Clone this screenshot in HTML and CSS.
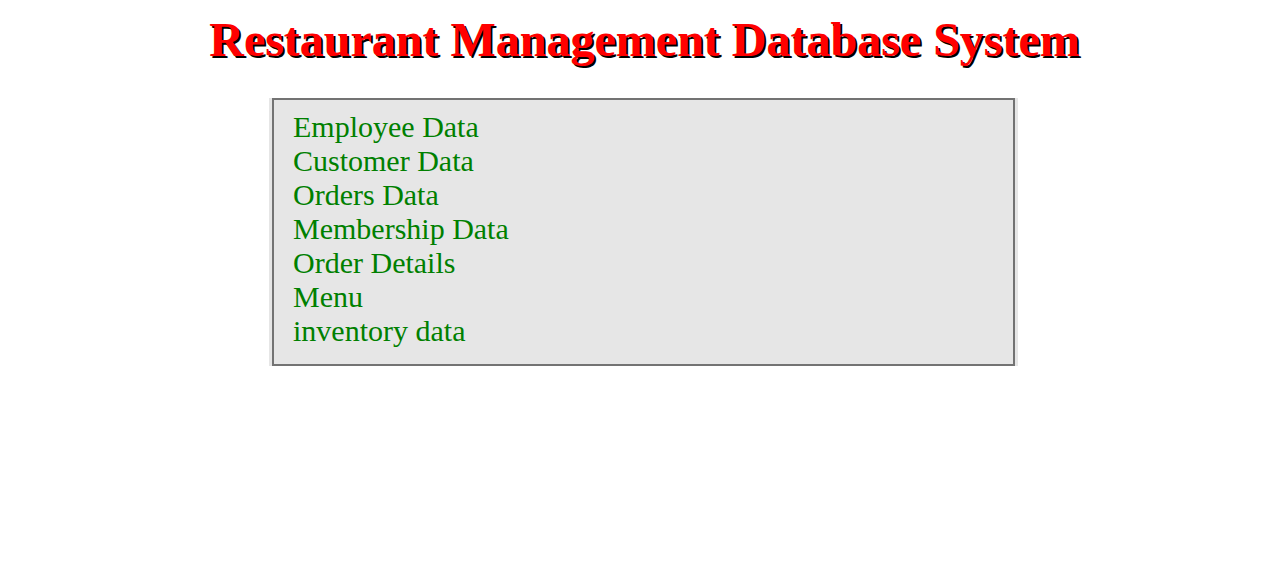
FILE: index.html
```html
<!DOCTYPE html>
<html>
<head>
<meta charset="utf-8">
<link rel="stylesheet" href="styles.css">
</head>
<body>
<h1 class="title">Restaurant Management Database System</h1>
<div class="menu-wrap">
  <ul class="menu">
    <li><a href="#">Employee Data</a></li>
    <li><a href="#">Customer Data</a></li>
    <li><a href="#">Orders Data</a></li>
    <li><a href="#">Membership Data</a></li>
    <li><a href="#">Order Details</a></li>
    <li><a href="#">Menu</a></li>
    <li><a href="#">inventory data</a></li>
  </ul>
</div>
</body>
</html>
```
FILE: styles.css
```css
body {
  margin: 8px;
  background: #ffffff;
  font-family: "Liberation Serif", "Times New Roman", serif;
}
.title {
  margin: 4px 0 0 0;
  text-align: center;
  font-size: 48px;
  font-weight: bold;
  color: #ff0000;
  text-shadow: 2px 2px 0 #000000;
  padding-left: 28px;
}
.menu-wrap {
  display: flex;
  justify-content: center;
  padding-left: 26px;
  margin-top: 31px;
}
.menu {
  list-style: none;
  margin: 0;
  width: 700px;
  padding: 10px 20px 16px 19px;
  background: #e6e6e6;
  border: 2px solid #737373;
  box-shadow: -3px 0 0 #e6e6e6, 3px 0 0 #e6e6e6;
}
.menu li {
  font-size: 30px;
  line-height: 34px;
}
.menu a {
  color: #008000;
  text-decoration: none;
}
```
